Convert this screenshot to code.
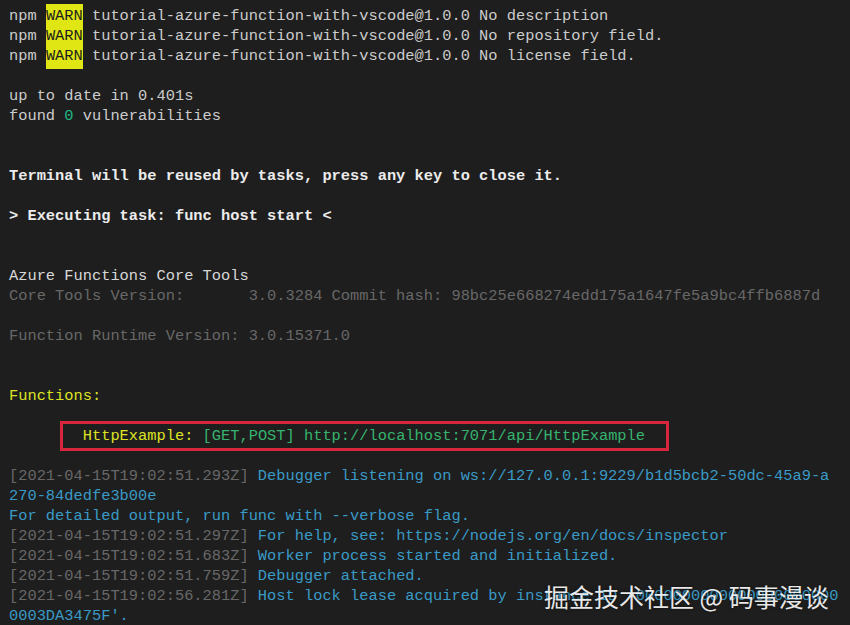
import React from 'react';

const gray = 'text-[#686868]';
const cyan = 'text-[#3a9ac6]';

const Ts = ({ t }) => <span className={gray}>[{t}]</span>;

const Warn = () => (
  <span className="pt-[3px] pb-[4px] bg-[#e0e614] text-[#1e1e1e]">WARN</span>
);

export default function App() {
  return (
    <div
      className="relative w-[850px] h-[625px] overflow-hidden bg-[#1e1e1e] pt-[6px] pl-[9px] text-[15.37px] leading-[20px] text-[#cccccc] whitespace-pre"
      style={{ fontFamily: '"Liberation Mono", "DejaVu Sans Mono", monospace' }}
    >
      {/* npm output */}
      <div>npm <Warn /> tutorial-azure-function-with-vscode@1.0.0 No description</div>
      <div>npm <Warn /> tutorial-azure-function-with-vscode@1.0.0 No repository field.</div>
      <div>npm <Warn /> tutorial-azure-function-with-vscode@1.0.0 No license field.</div>
      <div> </div>
      <div>up to date in 0.401s</div>
      <div>found <span className="text-[#1fb884]">0</span> vulnerabilities</div>
      <div> </div>
      <div> </div>
      <div className="font-bold text-[#ececec]">Terminal will be reused by tasks, press any key to close it.</div>
      <div> </div>
      <div className="font-bold text-[#ececec]">&gt; Executing task: func host start &lt;</div>
      <div> </div>
      <div> </div>

      {/* func host */}
      <div className="text-[#d8d8d8]">Azure Functions Core Tools</div>
      <div className={gray}>Core Tools Version:       3.0.3284 Commit hash: 98bc25e668274edd175a1647fe5a9bc4ffb6887d</div>
      <div> </div>
      <div className={gray}>Function Runtime Version: 3.0.15371.0</div>
      <div> </div>
      <div> </div>
      <div className="text-[#dde324]">Functions:</div>
      <div> </div>
      <div>
        <span>        </span>
        <span className="text-[#dde324]">HttpExample:</span>
        <span className="text-[#36b46e]"> [GET,POST] http://localhost:7071/api/HttpExample</span>
      </div>
      <div> </div>

      {/* host log */}
      <div><Ts t="2021-04-15T19:02:51.293Z" /><span className={cyan}> Debugger listening on ws://127.0.0.1:9229/b1d5bcb2-50dc-45a9-a</span></div>
      <div className={cyan}>270-84dedfe3b00e</div>
      <div className={cyan}>For detailed output, run func with --verbose flag.</div>
      <div><Ts t="2021-04-15T19:02:51.297Z" /><span className={cyan}> For help, see: https://nodejs.org/en/docs/inspector</span></div>
      <div><Ts t="2021-04-15T19:02:51.683Z" /><span className={cyan}> Worker process started and initialized.</span></div>
      <div><Ts t="2021-04-15T19:02:51.759Z" /><span className={cyan}> Debugger attached.</span></div>
      <div><Ts t="2021-04-15T19:02:56.281Z" /><span className={cyan}> Host lock lease acquired by instance ID '0000000000000000000000</span></div>
      <div className={cyan}>0003DA3475F'.</div>

      {/* red highlight annotation */}
      <div className="absolute left-[60px] top-[421px] w-[609px] h-[30px] border-[3px] border-[#d8263c]" />

      {/* watermark */}
      <div
        className="absolute left-[544px] top-[581px] text-[25px] leading-[30px] text-white/90 [text-shadow:0_0_3px_rgba(0,0,0,0.6)]"
        style={{ fontFamily: '"Noto Sans CJK SC", "Noto Sans", sans-serif' }}
      >
        掘金技术社区 @ 码事漫谈
      </div>
    </div>
  );
}
